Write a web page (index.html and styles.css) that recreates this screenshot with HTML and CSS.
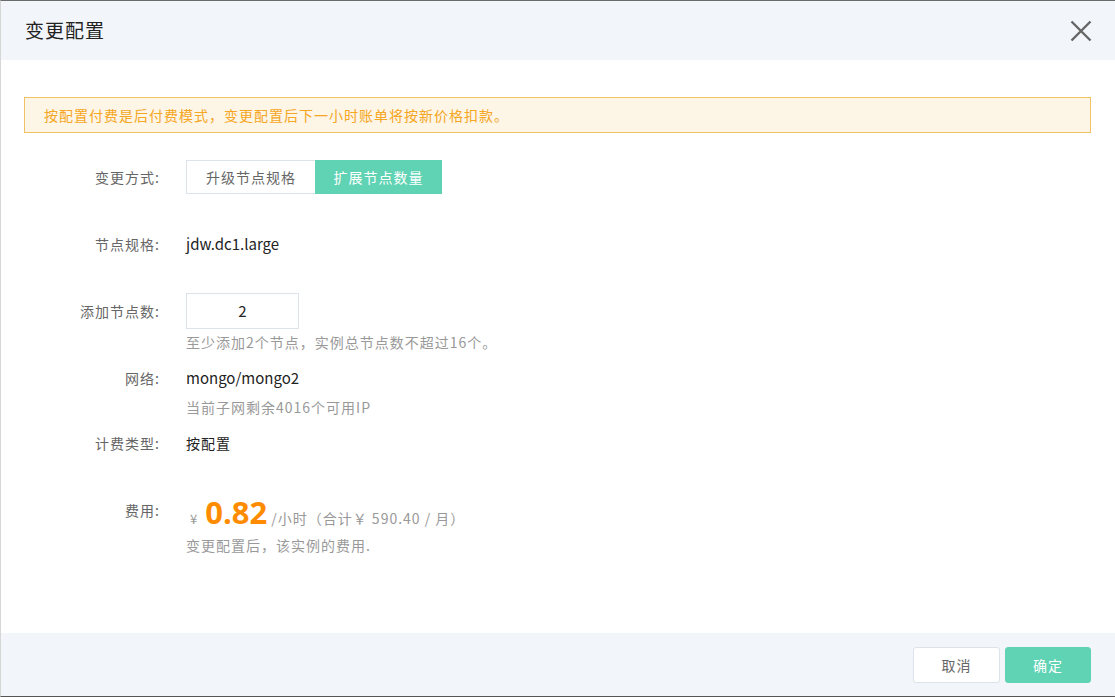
FILE: index.html
```html
<!DOCTYPE html>
<html lang="zh">
<head>
<meta charset="utf-8">
<title>变更配置</title>
<link rel="stylesheet" href="styles.css">
</head>
<body>
<div class="dialog">
  <div class="dlg-header">
    <div class="dlg-title">变更配置</div>
    <button class="dlg-close" aria-label="关闭">
      <svg width="22" height="22" viewBox="0 0 22 22"><path d="M1.5 1.5 L20.5 20.5 M20.5 1.5 L1.5 20.5" stroke="#666" stroke-width="2.4" fill="none"/></svg>
    </button>
  </div>
  <div class="dlg-body">
    <div class="alert">按配置付费是后付费模式，变更配置后下一小时账单将按新价格扣款。</div>
    <div class="form">
      <div class="row row-mode">
        <div class="label lh34">变更方式:</div>
        <div class="toggle">
          <span class="tg">升级节点规格</span>
          <span class="tg active">扩展节点数量</span>
        </div>
      </div>
      <div class="row row-spec">
        <div class="label lh20">节点规格:</div>
        <div class="value latin">jdw.dc1.large</div>
      </div>
      <div class="row row-add">
        <div class="label lh36">添加节点数:</div>
        <div class="col">
          <div class="num-input">2</div>
          <div class="hint hint-add">至少添加2个节点，实例总节点数不超过16个。</div>
        </div>
      </div>
      <div class="row row-net">
        <div class="label lh20">网络:</div>
        <div class="col">
          <div class="value latin">mongo/mongo2</div>
          <div class="hint hint-net">当前子网剩余4016个可用IP</div>
        </div>
      </div>
      <div class="row row-pay">
        <div class="label lh20">计费类型:</div>
        <div class="value">按配置</div>
      </div>
      <div class="row row-fee">
        <div class="label lh26">费用:</div>
        <div class="col">
          <div class="price-line">
            <span class="yen">¥</span>
            <span class="price">0.82</span>
            <span class="unit">/小时（合计￥ 590.40 / 月）</span>
          </div>
          <div class="hint hint-fee">变更配置后，该实例的费用.</div>
        </div>
      </div>
    </div>
  </div>
  <div class="dlg-footer">
    <button class="btn btn-cancel">取消</button>
    <button class="btn btn-ok">确定</button>
  </div>
</div>
</body>
</html>
```
FILE: styles.css
```css
* { box-sizing: border-box; }
html, body { margin: 0; padding: 0; }
body {
  font-family: "Noto Sans CJK SC", "Noto Sans", sans-serif;
  color: #333;
  background: #fff;
}
.dialog {
  width: 1115px;
  height: 697px;
  border-top: 1px solid #6b6b6b;
  border-bottom: 1px solid #555;
  border-left: 1px solid #d6d6d6;
  display: flex;
  flex-direction: column;
}
.dlg-header {
  height: 59px;
  background: #f2f5fa;
  display: flex;
  align-items: center;
  justify-content: space-between;
  padding: 0 23px 0 24px;
  flex: none;
}
.dlg-title {
  font-size: 19px;
  letter-spacing: 1px;
  color: #222;
  line-height: 24px;
  margin-top: -2px;
}
.dlg-close {
  border: 0;
  background: transparent;
  padding: 0;
  width: 22px;
  height: 22px;
  margin-top: 1px;
  cursor: pointer;
}
.dlg-close svg { display: block; }
.dlg-body {
  flex: 1;
  padding: 37px 24px 0 23px;
}
.alert {
  height: 36px;
  border: 1px solid #f3c165;
  background: #fdf5e6;
  color: #f5a623;
  font-size: 14px;
  letter-spacing: 1px;
  line-height: 34px;
  padding-left: 19px;
}
.form { display: flex; flex-direction: column; }
.row { display: flex; align-items: flex-start; }
.label {
  width: 136px;
  text-align: right;
  font-size: 14px;
  letter-spacing: 1px;
  color: #666;
  margin-right: 26px;
  flex: none;
}
.lh20 { line-height: 20px; }
.lh26 { line-height: 26px; }
.lh34 { line-height: 34px; }
.lh36 { line-height: 36px; }
.col { display: flex; flex-direction: column; }
.value { font-size: 14px; letter-spacing: 1px; line-height: 20px; color: #222; }
.value.latin { font-size: 15px; letter-spacing: 0; }
.hint { font-size: 14px; letter-spacing: 1px; line-height: 20px; color: #999; }

.row-mode { margin-top: 27px; }
.toggle { display: flex; height: 34px; }
.tg {
  font-size: 14px;
  letter-spacing: 1px;
  line-height: 32px;
  height: 34px;
  border: 1px solid #dde3ea;
  color: #666;
  background: #fff;
}
.tg:first-child { width: 129px; text-align: center; border-right: 0; }
.tg.active {
  width: 127px;
  text-align: center;
  background: #5fd3b3;
  border-color: #5fd3b3;
  color: #fff;
}

.row-spec { margin-top: 40px; }
.row-add { margin-top: 39px; }
.num-input {
  width: 113px;
  height: 36px;
  border: 1px solid #dde3ea;
  text-align: center;
  font-size: 15px;
  line-height: 34px;
  color: #222;
}
.hint-add { margin-top: 3px; }
.row-net { margin-top: 16px; }
.hint-net { margin-top: 9px; }
.row-pay { margin-top: 16px; }
.row-fee { margin-top: 44px; }
.price-line {
  display: flex;
  align-items: baseline;
  height: 30px;
  line-height: 30px;
  padding-left: 4px;
}
.yen { font-size: 13px; color: #999; margin-right: 8px; }
.price {
  font-size: 31px;
  font-weight: 700;
  color: #ff8c00;
  margin-right: 4px;
  font-family: "Open Sans", "Noto Sans", sans-serif;
}
.unit { font-size: 14px; letter-spacing: 1px; color: #999; }
.hint-fee { margin-top: 8px; }

.dlg-footer {
  height: 63px;
  background: #f2f5fa;
  flex: none;
  display: flex;
  justify-content: flex-end;
  align-items: center;
  gap: 5px;
  padding-right: 24px;
}
.btn {
  height: 36px;
  border-radius: 3px;
  font-size: 14px;
  letter-spacing: 1px;
  font-family: inherit;
  cursor: pointer;
}
.btn-cancel {
  width: 87px;
  border: 1px solid #dde3ea;
  background: #fff;
  color: #666;
}
.btn-ok {
  width: 86px;
  border: 1px solid #5fd3b3;
  background: #5fd3b3;
  color: #fff;
}
```
